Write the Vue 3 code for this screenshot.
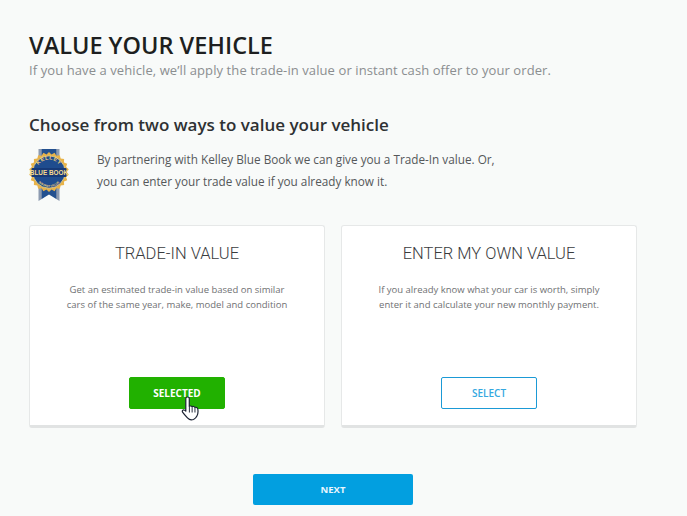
<script setup>
import { ref } from 'vue';

const options = ref([
  {
    id: 1,
    title: 'TRADE-IN VALUE',
    text: ['Get an estimated trade-in value based on similar', 'cars of the same year, make, model and condition'],
    selected: true
  },
  {
    id: 2,
    title: 'ENTER MY OWN VALUE',
    text: ['If you already know what your car is worth, simply', 'enter it and calculate your new monthly payment.'],
    selected: false
  }
]);

const points = Array.from({ length: 44 }, (_, i) => {
  const a = (i / 44) * Math.PI * 2;
  const r = i % 2 ? 20 : 17.8;
  return `${(20 + Math.cos(a) * r).toFixed(1)},${(23 + Math.sin(a) * r).toFixed(1)}`;
}).join(' ');
</script>

<template>
  <main class="page">
    <h1 class="title">VALUE YOUR VEHICLE</h1>
    <p class="subtitle">If you have a vehicle, we’ll apply the trade-in value or instant cash offer to your order.</p>

    <h2 class="heading">Choose from two ways to value your vehicle</h2>
    <div class="intro">
      <svg class="badge" width="40" height="53" viewBox="0 0 40 53">
        <defs>
          <path id="arc-top" d="M7.5 23A12.5 12.5 0 0 1 32.5 23" />
          <path id="arc-bottom" d="M6 24A14 14 0 0 0 34 24" />
          <linearGradient id="ribbon" x1="0" y1="0" x2="1" y2="0">
            <stop offset="0" stop-color="#8c9ab0" />
            <stop offset=".14" stop-color="#8c9ab0" />
            <stop offset=".15" stop-color="#23508f" />
            <stop offset=".85" stop-color="#23508f" />
            <stop offset=".86" stop-color="#8c9ab0" />
            <stop offset="1" stop-color="#8c9ab0" />
          </linearGradient>
        </defs>
        <path d="M9.5 0H30.5V52L20 45.5L9.5 52Z" fill="url(#ribbon)" />
        <polygon :points="points" fill="#e8b349" />
        <circle cx="20" cy="23" r="16.2" fill="#1f4c8e" stroke="#f6d98a" stroke-width=".8" />
        <text class="badge-small"><textPath href="#arc-top" startOffset="50%">KELLEY</textPath></text>
        <rect x="2.5" y="19" width="35" height="9" rx="1" fill="#173a78" />
        <text x="20" y="26" class="badge-main">BLUE BOOK</text>
        <text class="badge-tiny"><textPath href="#arc-bottom" startOffset="50%">INSTANT VALUE</textPath></text>
      </svg>
      <p class="intro-text">By partnering with Kelley Blue Book we can give you a Trade-In value. Or,<br />you can enter your trade value if you already know it.</p>
    </div>

    <div class="cards">
      <div v-for="option in options" :key="option.id" class="card">
        <h3 class="card-title">{{ option.title }}</h3>
        <p class="card-text">
          <span v-for="line in option.text" :key="line" class="card-line">{{ line }}</span>
        </p>
        <button class="card-button" :class="{ selected: option.selected }">
          {{ option.selected ? 'SELECTED' : 'SELECT' }}
          <svg v-if="option.selected" class="cursor" width="18" height="25" viewBox="0 0 16.5 25" preserveAspectRatio="none">
            <path d="M6 1C6.9 1 7.6 1.7 7.6 2.6V10.4C8.2 9.7 9.8 9.8 10.2 10.8C10.8 10.1 12.4 10.3 12.8 11.5C13.6 11 15.2 11.5 15.4 13C15.8 15.6 15.6 18 14.6 20C14 21.3 13.4 22.5 11.5 23.4C9.5 24.2 7.4 23.6 6.2 22.2C5 20.8 3.2 18.8 1.6 16.4C.6 14.9 1.8 13.3 3.4 14.2L4.4 15.2V2.6C4.4 1.7 5.1 1 6 1Z" fill="#fff" stroke="#1c2333" stroke-width="1.1" stroke-linejoin="round" />
            <path d="M7.7 11V16.5M10.2 11.2V16.5M12.8 11.8V16.5" fill="none" stroke="#1c2333" stroke-width=".9" />
          </svg>
        </button>
      </div>
    </div>

    <div class="footer">
      <button class="next-button">NEXT</button>
    </div>
  </main>
</template>

<style>
html, body {
  background: #f8faf9;
}
</style>

<style scoped>
.page {
  box-sizing: border-box;
  width: 687px;
  height: 516px;
  overflow: hidden;
  padding: 32px 50px 0 29px;
  font-family: "Open Sans", "Noto Sans", sans-serif;
  background: #f8faf9;
}

.title {
  margin: 0;
  font-size: 23.5px;
  line-height: 26px;
  font-weight: 600;
  color: #1d1f20;
}

.subtitle {
  margin: 4px 0 0;
  font-size: 13px;
  letter-spacing: 0.09px;
  line-height: 17px;
  color: #8b8e90;
}

.heading {
  margin: 35px 0 0;
  font-size: 17px;
  line-height: 22px;
  font-weight: 600;
  color: #2e3133;
}

.intro {
  display: flex;
  margin-top: 12px;
  height: 59px;
}

.badge {
  flex: none;
  margin-top: 1px;
}

.intro-text {
  margin: 0 0 0 28px;
  font-size: 11.75px;
  line-height: 22px;
  color: #55585a;
}

.badge-small, .badge-main, .badge-tiny {
  font-family: "Liberation Sans", sans-serif;
  text-anchor: middle;
  font-weight: 700;
}

.badge-small {
  font-size: 5.5px;
  letter-spacing: .5px;
  fill: #f3d27a;
}

.badge-main {
  font-size: 6.4px;
  fill: #f6dc8f;
}

.badge-tiny {
  font-size: 3px;
  fill: #f3d27a;
}

.cards {
  display: flex;
  gap: 16px;
  margin-top: 18px;
}

.card {
  box-sizing: border-box;
  width: 296px;
  height: 203px;
  padding-top: 17px;
  display: flex;
  flex-direction: column;
  align-items: center;
  background: #fff;
  border: 1px solid #e6e8e8;
  border-bottom: 3px solid #e1e3e3;
  border-radius: 3px;
}

.card-title {
  margin: 0;
  font-family: Roboto, sans-serif;
  font-size: 16.5px;
  line-height: 22px;
  font-weight: 300;
  color: #3a3c3e;
}

.card-text {
  margin: 17px 0 0;
  text-align: center;
  font-size: 9.5px;
  line-height: 15px;
  color: #6f7173;
}

.card-line {
  display: block;
}

.card-button {
  position: relative;
  box-sizing: border-box;
  width: 96px;
  height: 32px;
  margin-top: 65px;
  padding: 0;
  font-family: inherit;
  font-size: 10px;
  font-weight: 600;
  color: #35a8e0;
  background: #fff;
  border: 1px solid #1b9ad6;
  border-radius: 2px;
}

.card-button.selected {
  color: #fff;
  font-weight: 700;
  background: #21b100;
  border-color: #21b100;
}

.cursor {
  position: absolute;
  left: 51px;
  top: 18px;
}

.footer {
  display: flex;
  justify-content: center;
  margin-top: 46px;
}

.next-button {
  width: 160px;
  height: 31px;
  padding: 0;
  font-family: inherit;
  font-size: 9.5px;
  font-weight: 700;
  color: #e8f6fd;
  background: #029fe0;
  border: none;
  border-radius: 2px;
}
</style>
